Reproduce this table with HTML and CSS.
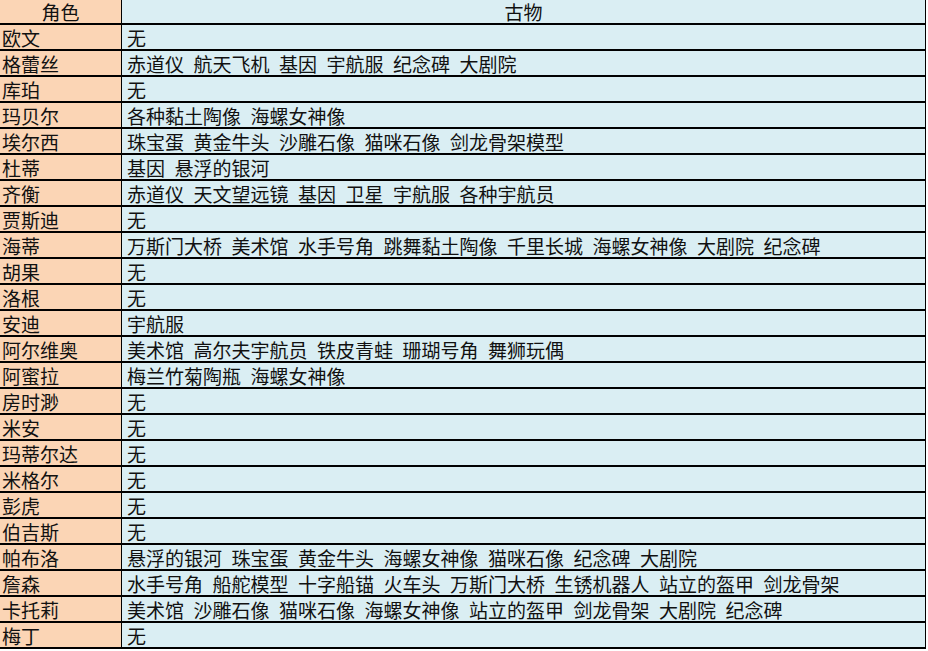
FILE: index.html
```html
<!DOCTYPE html>
<html lang="zh-CN">
<head>
<meta charset="utf-8">
<title>角色与古物</title>
<link rel="stylesheet" href="styles.css">
</head>
<body>
<table class="sheet">
  <colgroup><col class="c-role"><col class="c-items"></colgroup>
  <thead>
    <tr><th class="role">角色</th><th class="items">古物</th></tr>
  </thead>
  <tbody>
    <tr><td class="role">欧文</td><td class="items"><span>无</span></td></tr>
    <tr><td class="role">格蕾丝</td><td class="items"><span>赤道仪</span><span>航天飞机</span><span>基因</span><span>宇航服</span><span>纪念碑</span><span>大剧院</span></td></tr>
    <tr><td class="role">库珀</td><td class="items"><span>无</span></td></tr>
    <tr><td class="role">玛贝尔</td><td class="items"><span>各种黏土陶像</span><span>海螺女神像</span></td></tr>
    <tr><td class="role">埃尔西</td><td class="items"><span>珠宝蛋</span><span>黄金牛头</span><span>沙雕石像</span><span>猫咪石像</span><span>剑龙骨架模型</span></td></tr>
    <tr><td class="role">杜蒂</td><td class="items"><span>基因</span><span>悬浮的银河</span></td></tr>
    <tr><td class="role">齐衡</td><td class="items"><span>赤道仪</span><span>天文望远镜</span><span>基因</span><span>卫星</span><span>宇航服</span><span>各种宇航员</span></td></tr>
    <tr><td class="role">贾斯迪</td><td class="items"><span>无</span></td></tr>
    <tr><td class="role">海蒂</td><td class="items"><span>万斯门大桥</span><span>美术馆</span><span>水手号角</span><span>跳舞黏土陶像</span><span>千里长城</span><span>海螺女神像</span><span>大剧院</span><span>纪念碑</span></td></tr>
    <tr><td class="role">胡果</td><td class="items"><span>无</span></td></tr>
    <tr><td class="role">洛根</td><td class="items"><span>无</span></td></tr>
    <tr><td class="role">安迪</td><td class="items"><span>宇航服</span></td></tr>
    <tr><td class="role">阿尔维奥</td><td class="items"><span>美术馆</span><span>高尔夫宇航员</span><span>铁皮青蛙</span><span>珊瑚号角</span><span>舞狮玩偶</span></td></tr>
    <tr><td class="role">阿蜜拉</td><td class="items"><span>梅兰竹菊陶瓶</span><span>海螺女神像</span></td></tr>
    <tr><td class="role">房时渺</td><td class="items"><span>无</span></td></tr>
    <tr><td class="role">米安</td><td class="items"><span>无</span></td></tr>
    <tr><td class="role">玛蒂尔达</td><td class="items"><span>无</span></td></tr>
    <tr><td class="role">米格尔</td><td class="items"><span>无</span></td></tr>
    <tr><td class="role">彭虎</td><td class="items"><span>无</span></td></tr>
    <tr><td class="role">伯吉斯</td><td class="items"><span>无</span></td></tr>
    <tr><td class="role">帕布洛</td><td class="items"><span>悬浮的银河</span><span>珠宝蛋</span><span>黄金牛头</span><span>海螺女神像</span><span>猫咪石像</span><span>纪念碑</span><span>大剧院</span></td></tr>
    <tr><td class="role">詹森</td><td class="items"><span>水手号角</span><span>船舵模型</span><span>十字船锚</span><span>火车头</span><span>万斯门大桥</span><span>生锈机器人</span><span>站立的盔甲</span><span>剑龙骨架</span></td></tr>
    <tr><td class="role">卡托莉</td><td class="items"><span>美术馆</span><span>沙雕石像</span><span>猫咪石像</span><span>海螺女神像</span><span>站立的盔甲</span><span>剑龙骨架</span><span>大剧院</span><span>纪念碑</span></td></tr>
    <tr><td class="role">梅丁</td><td class="items"><span>无</span></td></tr>
  </tbody>
</table>
</body>
</html>
```

FILE: styles.css
```css
html, body {
  margin: 0;
  padding: 0;
  background: #ffffff;
}

.sheet {
  border-collapse: separate;
  border-spacing: 0;
  table-layout: fixed;
  width: 926px;
  font-family: "Noto Sans CJK SC", "Noto Sans", sans-serif;
  font-size: 19px;
  color: #111111;
}

.c-role { width: 122px; }
.c-items { width: 804px; }

.sheet th,
.sheet td {
  padding: 1px 0 0 0;
  border-bottom: 2px solid #000000;
  white-space: nowrap;
  line-height: 23px;
  height: 23px;
  vertical-align: middle;
  font-weight: normal;
}

.sheet thead th {
  padding-top: 0;
  line-height: 23px;
  height: 23px;
  text-align: center;
}

.sheet .role {
  background: #fbd5b5;
  border-right: 1px solid #000000;
  padding-left: 2px;
  text-align: left;
}

.sheet thead .role {
  padding-left: 0;
  text-align: center;
}

.sheet .items {
  background: #daeef3;
  border-right: 1px solid #000000;
  padding-left: 5px;
  text-align: left;
}

.sheet thead .items {
  padding-left: 0;
  text-align: center;
}

.items span + span {
  margin-left: 9.5px;
}
```
